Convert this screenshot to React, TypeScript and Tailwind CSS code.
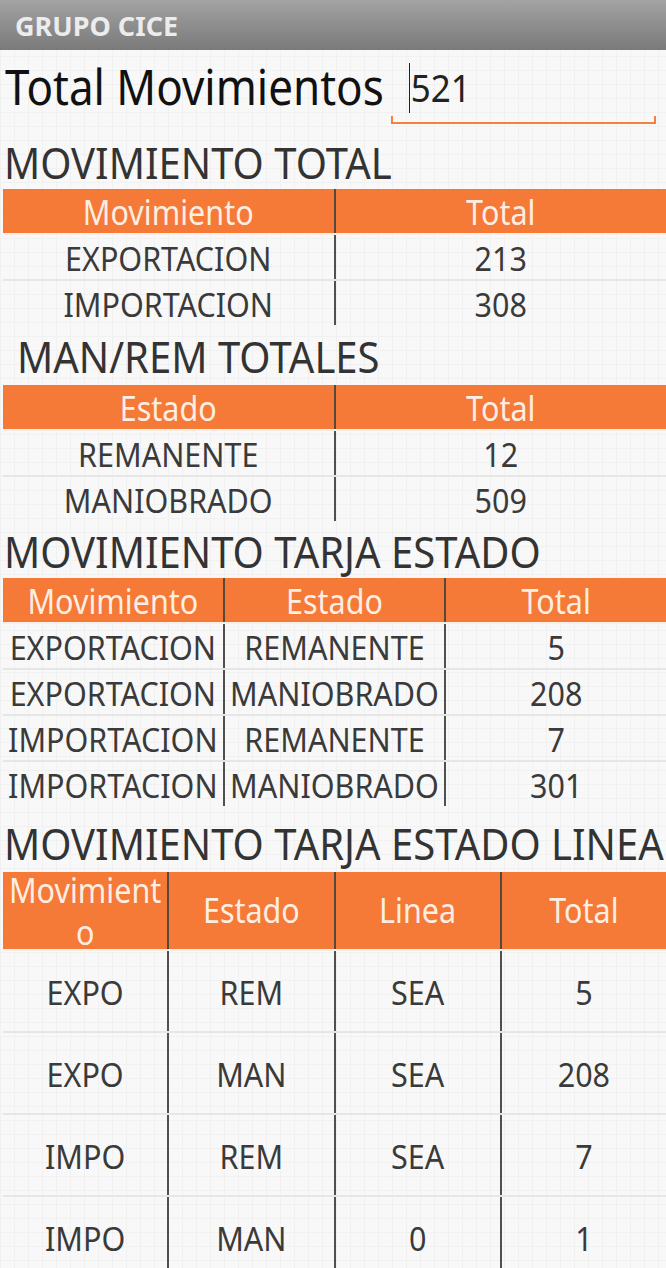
import React from "react";

function Table({ cols, rows, tall }: { cols: string[]; rows: string[][]; tall?: boolean }) {
  return (
    <div className="ml-[3px] w-[663px]">
      <div className={`flex bg-[#f57937] ${tall ? "h-[77px]" : "h-[44px]"}`}>
        {cols.map((c, i) => (
          <div
            key={i}
            className={`flex-1 min-w-0 flex items-center justify-center text-center text-[#fdeee3] text-[30.5px] px-[4px] ${
              tall ? "leading-[37px]" : "leading-none pt-[2px]"
            } ${i > 0 ? "border-l-2 border-[#55483f]" : ""}`}
          >
            <span className="inline-block break-all scale-y-[1.12]">{c}</span>
          </div>
        ))}
      </div>
      {rows.map((r, ri) => (
        <div
          key={ri}
          className={`flex border-t-2 ${ri === 0 ? "border-[#fbeee6]" : "border-[#e6e6e6]"} ${
            tall ? "h-[82px]" : "h-[46px]"
          }`}
        >
          {r.map((c, i) => (
            <div
              key={i}
              className={`flex-1 min-w-0 flex items-center justify-center text-[30.5px] leading-none text-[#3a3a3a] pt-[3px] whitespace-nowrap ${
                i > 0 ? "border-l-2 border-[#505050]" : ""
              }`}
            >
              <span className="inline-block scale-y-[1.1]">{c}</span>
            </div>
          ))}
        </div>
      ))}
    </div>
  );
}

function Heading({ text, cls }: { text: string; cls: string }) {
  return (
    <div className={`${cls} text-[40px] leading-none text-[#333333] whitespace-nowrap`}>
      <span className="inline-block scale-y-[1.1]">{text}</span>
    </div>
  );
}

export default function App() {
  return (
    <div className="w-[666px] h-[1268px] overflow-hidden bg-[#f8f8f8] bg-[linear-gradient(to_right,#f1f1f1_1px,transparent_1px),linear-gradient(to_bottom,#f1f1f1_1px,transparent_1px)] bg-[size:14px_14px] font-['Noto_Sans',sans-serif]">
      <div className="h-[50px] bg-linear-to-b from-[#a3a3a3] to-[#7a7a7a] flex items-center pl-[15px]">
        <span className="text-[27px] font-bold text-[#ececec] leading-none">GRUPO CICE</span>
      </div>
      <div className="flex h-[74px] pt-[14px]">
        <span className="ml-[5px] text-[44px] leading-none text-[#111111] whitespace-nowrap">
          <span className="inline-block scale-y-[1.1]">Total Movimientos</span>
        </span>
        <div className="ml-[7px] w-[265px] h-[60px] flex flex-col">
          <div className="flex-1 flex items-start">
            <span className="ml-[18px] mt-[-1px] w-px h-[50px] bg-[#222222]" />
            <span className="ml-px mt-[6px] text-[35px] leading-none text-[#222222]">
              <span className="inline-block scale-y-[1.1]">521</span>
            </span>
          </div>
          <div className="h-[8px] border-x-2 border-b-2 border-[#f5823c]" />
        </div>
      </div>

      <Heading text="MOVIMIENTO TOTAL" cls="h-[65px] pt-[18px] pl-[4px]" />
      <Table
        cols={["Movimiento", "Total"]}
        rows={[
          ["EXPORTACION", "213"],
          ["IMPORTACION", "308"],
        ]}
      />

      <Heading text="MAN/REM TOTALES" cls="h-[60px] pt-[11px] pl-[17px]" />
      <Table
        cols={["Estado", "Total"]}
        rows={[
          ["REMANENTE", "12"],
          ["MANIOBRADO", "509"],
        ]}
      />

      <Heading text="MOVIMIENTO TARJA ESTADO" cls="h-[57px] pt-[10px] pl-[4px]" />
      <Table
        cols={["Movimiento", "Estado", "Total"]}
        rows={[
          ["EXPORTACION", "REMANENTE", "5"],
          ["EXPORTACION", "MANIOBRADO", "208"],
          ["IMPORTACION", "REMANENTE", "7"],
          ["IMPORTACION", "MANIOBRADO", "301"],
        ]}
      />

      <Heading text="MOVIMIENTO TARJA ESTADO LINEA" cls="h-[66px] pt-[17px] pl-[4px]" />
      <Table
        tall
        cols={["Movimiento", "Estado", "Linea", "Total"]}
        rows={[
          ["EXPO", "REM", "SEA", "5"],
          ["EXPO", "MAN", "SEA", "208"],
          ["IMPO", "REM", "SEA", "7"],
          ["IMPO", "MAN", "0", "1"],
        ]}
      />
    </div>
  );
}
